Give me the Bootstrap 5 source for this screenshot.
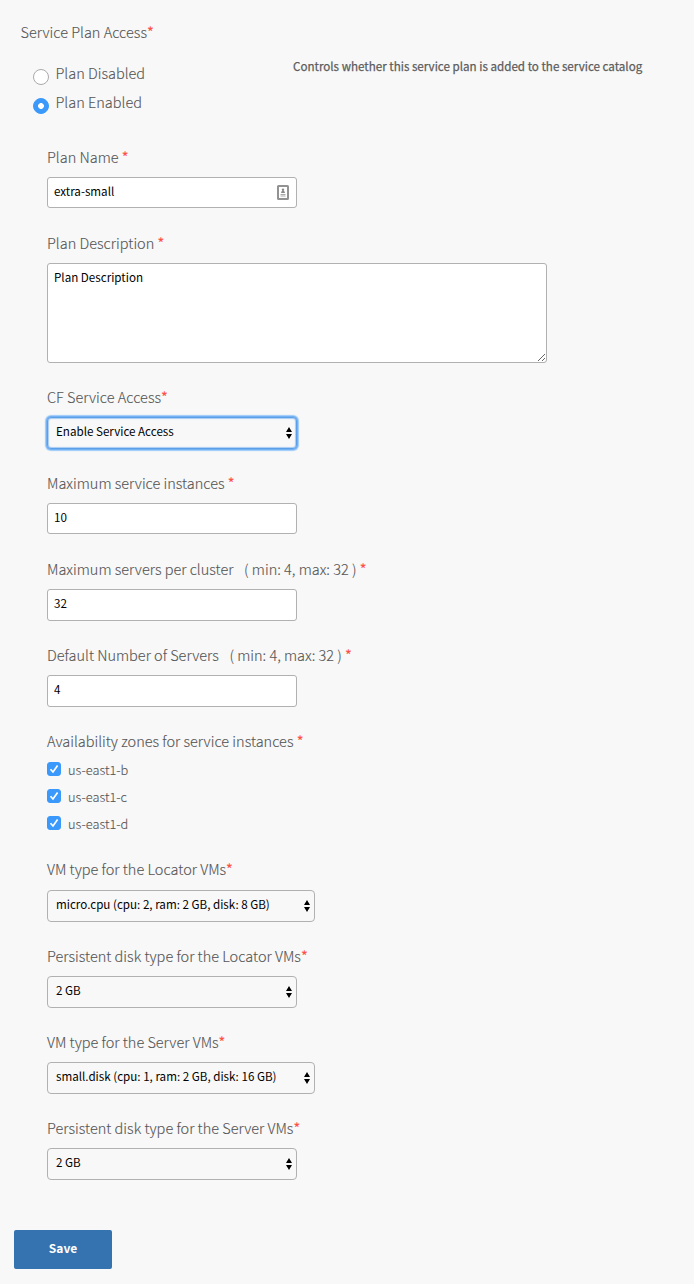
<!DOCTYPE html>
<html lang="en">
<head>
<meta charset="utf-8">
<meta name="viewport" content="width=device-width, initial-scale=1">
<title>Service Plan Access</title>
<link href="https://cdn.jsdelivr.net/npm/bootstrap@5.3.0/dist/css/bootstrap.min.css" rel="stylesheet">
<style>
  body { background: #f8f8f8; color: #555; font-family: "Noto Sans CJK SC", "Open Sans", sans-serif; font-size: 14.5px; line-height: 20px; font-weight: 300; -webkit-text-stroke: .12px; }
  .plan-form { padding: 22px 14px 15px; }
  .req { color: #ff5147; font-weight: 400; }
  .access-title { padding-left: 6.5px; }
  .access-options { width: 279px; padding: 21px 0 0 19px; }
  .access-help { padding-top: 14px; color: #5c5c5c; font-size: 11.62px; font-weight: 400; white-space: nowrap; -webkit-text-stroke: .25px; }
  .option-row { height: 29px; gap: 6.5px; }
  .option-row .form-check-input { width: 16px; height: 16px; margin: 6px 0 0; float: none; border-color: #aaa; }
  .form-check-input:checked { background-color: #3b99fc; border-color: #3b99fc; }
  .option-row .form-check-input:checked { border-color: #3b99fc; background-image: radial-gradient(circle, #fff 0 2.6px, transparent 3.2px); }
  .fields { padding: 26px 0 0 33px; }
  .field { height: 86px; }
  .field-area { height: 154px; }
  .field-zones { height: 128px; }
  .field-first-vm { height: 87px; }
  .field-first-vm .field-label { height: 31px; }
  .field-label { display: block; height: 30px; margin: 0; white-space: pre; }
  .range-hint { margin-left: 1px; }
  .fields .form-control, .fields .form-select { width: 250px; height: 32px; padding: 0 6px 4px; border: 1px solid #b1b1b1; border-radius: 3px; color: #000; font-size: 11.62px; font-weight: 400; line-height: 18px; -webkit-text-stroke: 0; }
  .fields .form-control { background-color: #fff; }
  .fields .form-control.short { height: 31px; padding-bottom: 3px; }
  .fields textarea.form-control { width: 500px; height: 100px; padding-top: 4px; resize: both; }
  .fields .form-select { padding: 0 20px 5px 8px; border-radius: 4px; background: #f8f8f8 url("data:image/svg+xml,%3Csvg xmlns='http://www.w3.org/2000/svg' width='6' height='12'%3E%3Cpath d='M0 5L3 0L6 5ZM0 7L3 12L6 7Z'/%3E%3C/svg%3E") no-repeat right 4px top 9px / 6px 12px; }
  .fields .wide { width: 268px; }
  .fields .active-select { border-color: #5b9fe8; box-shadow: 0 0 0 1px #74b1f2, 0 0 1px 2px #9ccafa, inset 0 0 1px 1px #a8cbf2; }
  .name-box { width: 250px; }
  .contact-icon { position: absolute; right: 8px; top: 8px; }
  .zone { height: 27px; gap: 7px; font-size: 12.8px; line-height: 18px; }
  .zone .form-check-input { width: 14px; height: 14px; margin: 1px 0 0; border-radius: 3px; background-size: 14px; background-image: url("data:image/svg+xml,%3Csvg xmlns='http://www.w3.org/2000/svg' viewBox='0 0 14 14'%3E%3Cpath d='M3.5 7.2L6 10L10.6 3.6' fill='none' stroke='white' stroke-width='1.7'/%3E%3C/svg%3E") !important; }
  .btn-save { width: 98px; height: 39px; margin-top: 26px; padding: 0 0 4px; border: 0; border-radius: 2px; background: #3572b0; color: #fff; font-size: 12px; font-weight: 700; -webkit-text-stroke: 0; }
</style>
</head>
<body>
<form class="plan-form">
  <div class="access-title">Service Plan Access<span class="req">*</span></div>
  <div class="d-flex">
    <div class="access-options">
      <label class="option-row d-flex"><input class="form-check-input" type="radio" name="access"><span>Plan Disabled</span></label>
      <label class="option-row d-flex"><input class="form-check-input" type="radio" name="access" checked><span>Plan Enabled</span></label>
    </div>
    <div class="access-help">Controls whether this service plan is added to the service catalog</div>
  </div>
  <div class="fields">
    <div class="field">
      <label class="field-label" for="name">Plan Name <span class="req">*</span></label>
      <div class="name-box position-relative">
        <input id="name" class="form-control short" value="extra-small">
        <svg class="contact-icon" width="12" height="15" viewBox="0 0 12 15"><rect x="1" y="1" width="10" height="13" rx=".5" fill="#fff" stroke="#929292" stroke-width="2"/><circle cx="6" cy="4.8" r="1.2" fill="#888"/><path d="M4.2 8V6.8L6 5.5L7.8 6.8V8Z" fill="#888"/><path d="M3.5 9.5h5M3.5 11h5" stroke="#aaa"/></svg>
      </div>
    </div>
    <div class="field field-area">
      <label class="field-label" for="description">Plan Description <span class="req">*</span></label>
      <textarea id="description" class="form-control">Plan Description</textarea>
    </div>
    <div class="field">
      <label class="field-label" for="cf">CF Service Access<span class="req">*</span></label>
      <select id="cf" class="form-select active-select"><option>Enable Service Access</option></select>
    </div>
    <div class="field">
      <label class="field-label" for="instances">Maximum service instances <span class="req">*</span></label>
      <input id="instances" class="form-control short" value="10">
    </div>
    <div class="field">
      <label class="field-label" for="servers">Maximum servers per cluster &nbsp; <span class="range-hint">( min: 4, max: 32 )</span> <span class="req">*</span></label>
      <input id="servers" class="form-control" value="32">
    </div>
    <div class="field">
      <label class="field-label" for="default">Default Number of Servers &nbsp; <span class="range-hint">( min: 4, max: 32 )</span> <span class="req">*</span></label>
      <input id="default" class="form-control" value="4">
    </div>
    <div class="field field-zones">
      <div class="field-label">Availability zones for service instances <span class="req">*</span></div>
      <label class="zone d-flex"><input class="form-check-input" type="checkbox" checked><span>us-east1-b</span></label>
      <label class="zone d-flex"><input class="form-check-input" type="checkbox" checked><span>us-east1-c</span></label>
      <label class="zone d-flex"><input class="form-check-input" type="checkbox" checked><span>us-east1-d</span></label>
    </div>
    <div class="field field-first-vm">
      <label class="field-label" for="vm1">VM type for the Locator VMs<span class="req">*</span></label>
      <select id="vm1" class="form-select wide"><option>micro.cpu (cpu: 2, ram: 2 GB, disk: 8 GB)</option></select>
    </div>
    <div class="field">
      <label class="field-label" for="disk1">Persistent disk type for the Locator VMs<span class="req">*</span></label>
      <select id="disk1" class="form-select"><option>2 GB</option></select>
    </div>
    <div class="field">
      <label class="field-label" for="vm2">VM type for the Server VMs<span class="req">*</span></label>
      <select id="vm2" class="form-select wide"><option>small.disk (cpu: 1, ram: 2 GB, disk: 16 GB)</option></select>
    </div>
    <div class="field">
      <label class="field-label" for="disk2">Persistent disk type for the Server VMs<span class="req">*</span></label>
      <select id="disk2" class="form-select"><option>2 GB</option></select>
    </div>
  </div>
  <button type="button" class="btn btn-save">Save</button>
</form>
<script src="https://cdn.jsdelivr.net/npm/bootstrap@5.3.0/dist/js/bootstrap.bundle.min.js"></script>
</body>
</html>
